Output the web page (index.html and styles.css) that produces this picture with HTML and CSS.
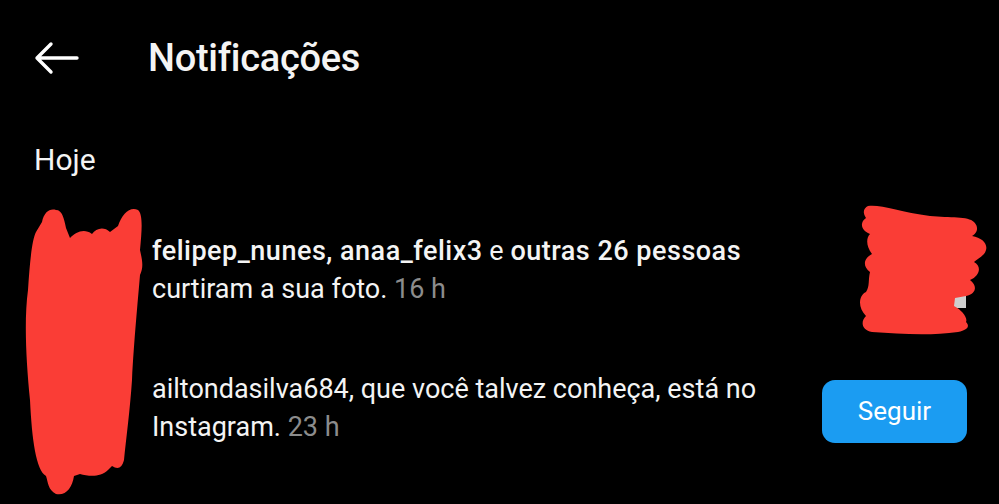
FILE: index.html
```html
<!DOCTYPE html>
<html lang="pt">
<head>
    <meta charset="UTF-8">
    <meta name="viewport" content="width=device-width, initial-scale=1.0">
    <title>Notificações</title>
    <link rel="stylesheet" href="styles.css">
</head>
<body>
    <div class="top-bar">
        <svg class="back" width="46" height="34" viewBox="0 0 46 34">
            <path d="M44 17 H4 M18 3 L4 17 L18 31" fill="none" stroke="#fff" stroke-width="3.4" stroke-linecap="round" stroke-linejoin="round"/>
        </svg>
        <h1 class="title">Notificações</h1>
    </div>

    <h2 class="section">Hoje</h2>

    <ul class="notif-list">
        <li class="notif">
            <div class="avatar"></div>
            <p class="notif-text"><b>felipep_nunes, anaa_felix3</b> e <b>outras 26 pessoas</b> curtiram a sua foto. <span class="time">16 h</span></p>
            <div class="thumb"></div>
        </li>
        <li class="notif">
            <div class="avatar"></div>
            <p class="notif-text">ailtondasilva684, que você talvez conheça, está no Instagram. <span class="time">23 h</span></p>
            <button class="follow">Seguir</button>
        </li>
    </ul>

    <!-- rabiscos vermelhos por cima das fotos -->
    <svg class="scribbles" width="999" height="504" viewBox="0 0 999 504">
        <path d="M42 222 C44 212 50 208 56 210 C62 210 64 218 66 228 L70 238 C76 232 84 228 92 234 C96 228 104 226 110 232 L118 226 C122 214 130 206 138 210 C143 214 142 230 140 250 C142 260 144 266 140 275 C138 300 134 340 132 380 C130 410 126 440 124 460 C122 468 118 470 112 466 L108 470 C100 478 88 476 80 474 L74 476 C72 488 66 496 56 494 C48 490 48 482 46 476 C36 470 32 440 30 400 C26 360 24 320 28 290 C30 260 32 240 36 232 Z" fill="#fa3d36"/>
        <rect x="948" y="290" width="18" height="18" fill="#cfcfcf"/>
        <path d="M868 206 C880 204 900 212 930 216 C950 218 968 216 974 222 C980 228 976 234 972 236 C984 238 990 246 984 254 C980 258 976 260 974 262 C982 266 980 276 970 280 C978 286 976 294 966 296 L955 298 L954 306 C962 310 968 318 966 322 C970 326 968 330 958 332 C930 336 900 334 872 332 C862 330 860 322 866 316 C858 308 858 296 866 292 C870 286 868 280 870 272 C862 266 864 258 872 254 C866 246 866 238 870 234 C860 230 860 222 866 218 C862 212 864 208 868 206 Z" fill="#fa3d36"/>
    </svg>
</body>
</html>
```

FILE: styles.css
```css
body {
    position: relative;
    margin: 0;
    background-color: #000;
    color: #f4f4f4;
    font-family: Roboto, "Noto Sans", sans-serif;
    width: 999px;
    height: 504px;
    overflow: hidden;
}
.top-bar {
    display: flex;
    align-items: center;
    height: 116px;
    padding-left: 33px;
}
.back {
    margin-right: 69px;
}
.title {
    margin: 0;
    font-size: 38px;
    font-weight: 500;
    letter-spacing: -0.3px;
}
.section {
    margin: 26px 0 0 34px;
    font-size: 30px;
    font-weight: 400;
}
.notif-list {
    list-style-type: none;
    margin: 43px 0 0 0;
    padding: 0;
}
.notif {
    display: flex;
    align-items: center;
    padding-left: 34px;
    padding-right: 32px;
    height: 100px;
}
.notif + .notif {
    margin-top: 38px;
}
.avatar {
    width: 118px;
    flex: none;
}
.notif-text {
    margin: 0;
    width: 625px;
    font-size: 27px;
    line-height: 38px;
}
.notif-text b {
    font-weight: 500;
    letter-spacing: 0.5px;
}
.time {
    color: #8c8c8c;
}
.thumb {
    margin-left: auto;
    width: 100px;
    height: 100px;
    flex: none;
}
.follow {
    margin-left: auto;
    margin-top: 6px;
    flex: none;
    width: 145px;
    height: 63px;
    border: none;
    border-radius: 13px;
    background-color: #1b9cf2;
    color: #fff;
    font-family: Roboto, "Noto Sans", sans-serif;
    font-size: 26px;
    font-weight: 400;
}
.scribbles {
    position: absolute;
    left: 0;
    top: 0;
    pointer-events: none;
}
```
